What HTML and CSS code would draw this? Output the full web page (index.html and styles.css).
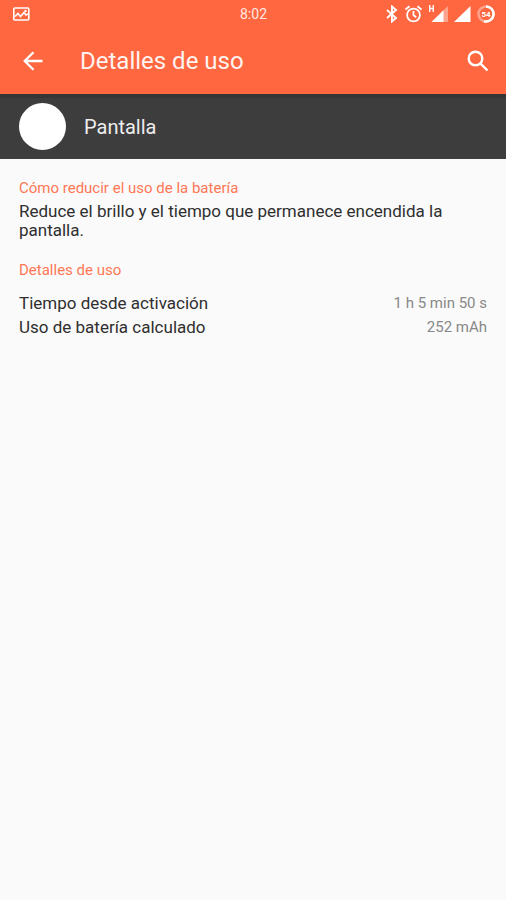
FILE: index.html
```html
<!DOCTYPE html>
<html lang="es">
<head>
<meta charset="utf-8">
<meta name="viewport" content="width=device-width, initial-scale=1">
<title>Detalles de uso</title>
<link rel="stylesheet" href="styles.css">
</head>
<body>
<header class="top">
  <div class="status">
    <div class="status-side">
      <svg width="18" height="14" viewBox="0 0 18 14" fill="none" stroke="currentColor"><rect x="1.800" y="1" width="15" height="12" rx="1" stroke-width="1.600"/><path d="M3 9.500l3-3 2.500 3 3.500-4 2 2.500 2-1" stroke-width="1.700"/><circle cx="13.500" cy="4" r="1.200" fill="currentColor" stroke="none"/></svg>
    </div>
    <time class="clock">8:02</time>
    <div class="status-side status-icons">
      <svg width="12" height="18" viewBox="0 0 12 18" fill="none" stroke="currentColor" stroke-width="1.900"><path d="M1 5l9 8-4 3.500v-15L10 5l-9 8"/></svg>
      <svg width="18" height="18" viewBox="0 0 18 18" fill="none" stroke="currentColor" stroke-width="1.800"><circle cx="9.500" cy="10" r="6.400"/><path d="M9.500 6v4.300l2.800 2M1.500 4.500l4-3.300M17.500 4.500l-4-3.300"/></svg>
      <svg width="20" height="18" viewBox="0 0 20 18"><path d="M1.700 0v7M5.300 0v7M1.700 3.500h3.600" fill="none" stroke="currentColor" stroke-width="1.400"/><path d="M3.500 17L20 1v16z" fill="currentColor" opacity=".4"/><path d="M3.500 17L15.500 5.300V17z" fill="currentColor"/></svg>
      <svg width="17" height="18" viewBox="0 0 17 18"><path d="M0 17L16.500 1v16z" fill="currentColor"/></svg>
      <svg width="18" height="18" viewBox="0 0 18 18"><circle cx="9" cy="9" r="7.500" fill="none" stroke="currentColor" stroke-width="2.500" opacity=".4"/><path d="M9 1.500a7.500 7.500 0 1 1-2 14.700" fill="none" stroke="currentColor" stroke-width="2.500"/><text class="charge" x="9" y="12" text-anchor="middle">54</text></svg>
    </div>
  </div>
  <div class="bar">
    <button class="icon-button" type="button" aria-label="Atrás"><svg width="20" height="20" viewBox="0 0 20 20" fill="none" stroke="currentColor" stroke-width="2.300"><path d="M19.500 10H2M10.500 1.200L1.700 10l8.800 8.800"/></svg></button>
    <h1 class="title">Detalles de uso</h1>
    <button class="icon-button" type="button" aria-label="Buscar"><svg width="22" height="22" viewBox="0 0 22 22" fill="none" stroke="currentColor" stroke-width="2.400"><circle cx="8.500" cy="8.500" r="6.800"/><path d="M13.300 13.300l7.200 7.200"/></svg></button>
  </div>
</header>
<section class="subject">
  <span class="avatar"></span>
  <h2 class="subject-name">Pantalla</h2>
</section>
<main class="content">
  <section class="tip">
    <h3 class="heading">Cómo reducir el uso de la batería</h3>
    <p class="text">Reduce el brillo y el tiempo que permanece encendida la pantalla.</p>
  </section>
  <section>
    <h3 class="heading">Detalles de uso</h3>
    <dl class="details">
      <div class="row"><dt>Tiempo desde activación</dt><dd>1 h 5 min 50 s</dd></div>
      <div class="row"><dt>Uso de batería calculado</dt><dd>252 mAh</dd></div>
    </dl>
  </section>
</main>
</body>
</html>
```
FILE: styles.css
```css
* {
  box-sizing: border-box;
}

body,
h1,
h2,
h3,
p,
dl,
dd {
  margin: 0;
}

body {
  min-height: 100vh;
  background: #fafafa;
  color: #2f2f2f;
  font-family: Roboto, "Liberation Sans", sans-serif;
}

svg {
  display: block;
}

.top {
  background: #ff6741;
  color: #fff;
}

.status {
  display: flex;
  align-items: center;
  height: 28px;
  padding: 0 11px 0 12px;
}

.status-side {
  flex: 1;
}

.clock {
  font-size: 14px;
  opacity: 0.85;
}

.status-icons {
  display: flex;
  justify-content: flex-end;
  gap: 6px;
}

.charge {
  fill: currentColor;
  font-size: 8px;
  font-weight: 700;
}

.bar {
  display: flex;
  align-items: center;
  height: 66px;
  padding: 0 9px 0 14px;
}

.icon-button {
  display: grid;
  place-items: center;
  width: 38px;
  height: 38px;
  padding: 0;
  border: 0;
  background: none;
  color: inherit;
}

.title {
  flex: 1;
  padding-left: 28px;
  font-size: 24px;
  font-weight: 400;
  opacity: 0.92;
}

.subject {
  display: flex;
  align-items: center;
  gap: 18px;
  height: 65px;
  padding: 0 19px;
  border-top: 4px solid #363636;
  border-bottom: 4px solid #3d3d3d;
  background: #3d3d3d;
  color: #ededed;
}

.avatar {
  width: 47px;
  height: 47px;
  border-radius: 50%;
  background: #fff;
}

.subject-name {
  font-size: 20px;
  font-weight: 400;
}

.content {
  padding: 19px;
}

.tip {
  margin-bottom: 20px;
}

.heading {
  color: #ff7755;
  font-size: 15px;
  font-weight: 400;
  line-height: 20px;
}

.text {
  padding-top: 4px;
  font-size: 17px;
  line-height: 19px;
}

.details {
  padding-top: 11px;
}

.row {
  display: flex;
  justify-content: space-between;
  align-items: center;
  line-height: 24px;
}

.row dt {
  font-size: 17px;
}

.row dd {
  color: #888;
  font-size: 15px;
}
```
